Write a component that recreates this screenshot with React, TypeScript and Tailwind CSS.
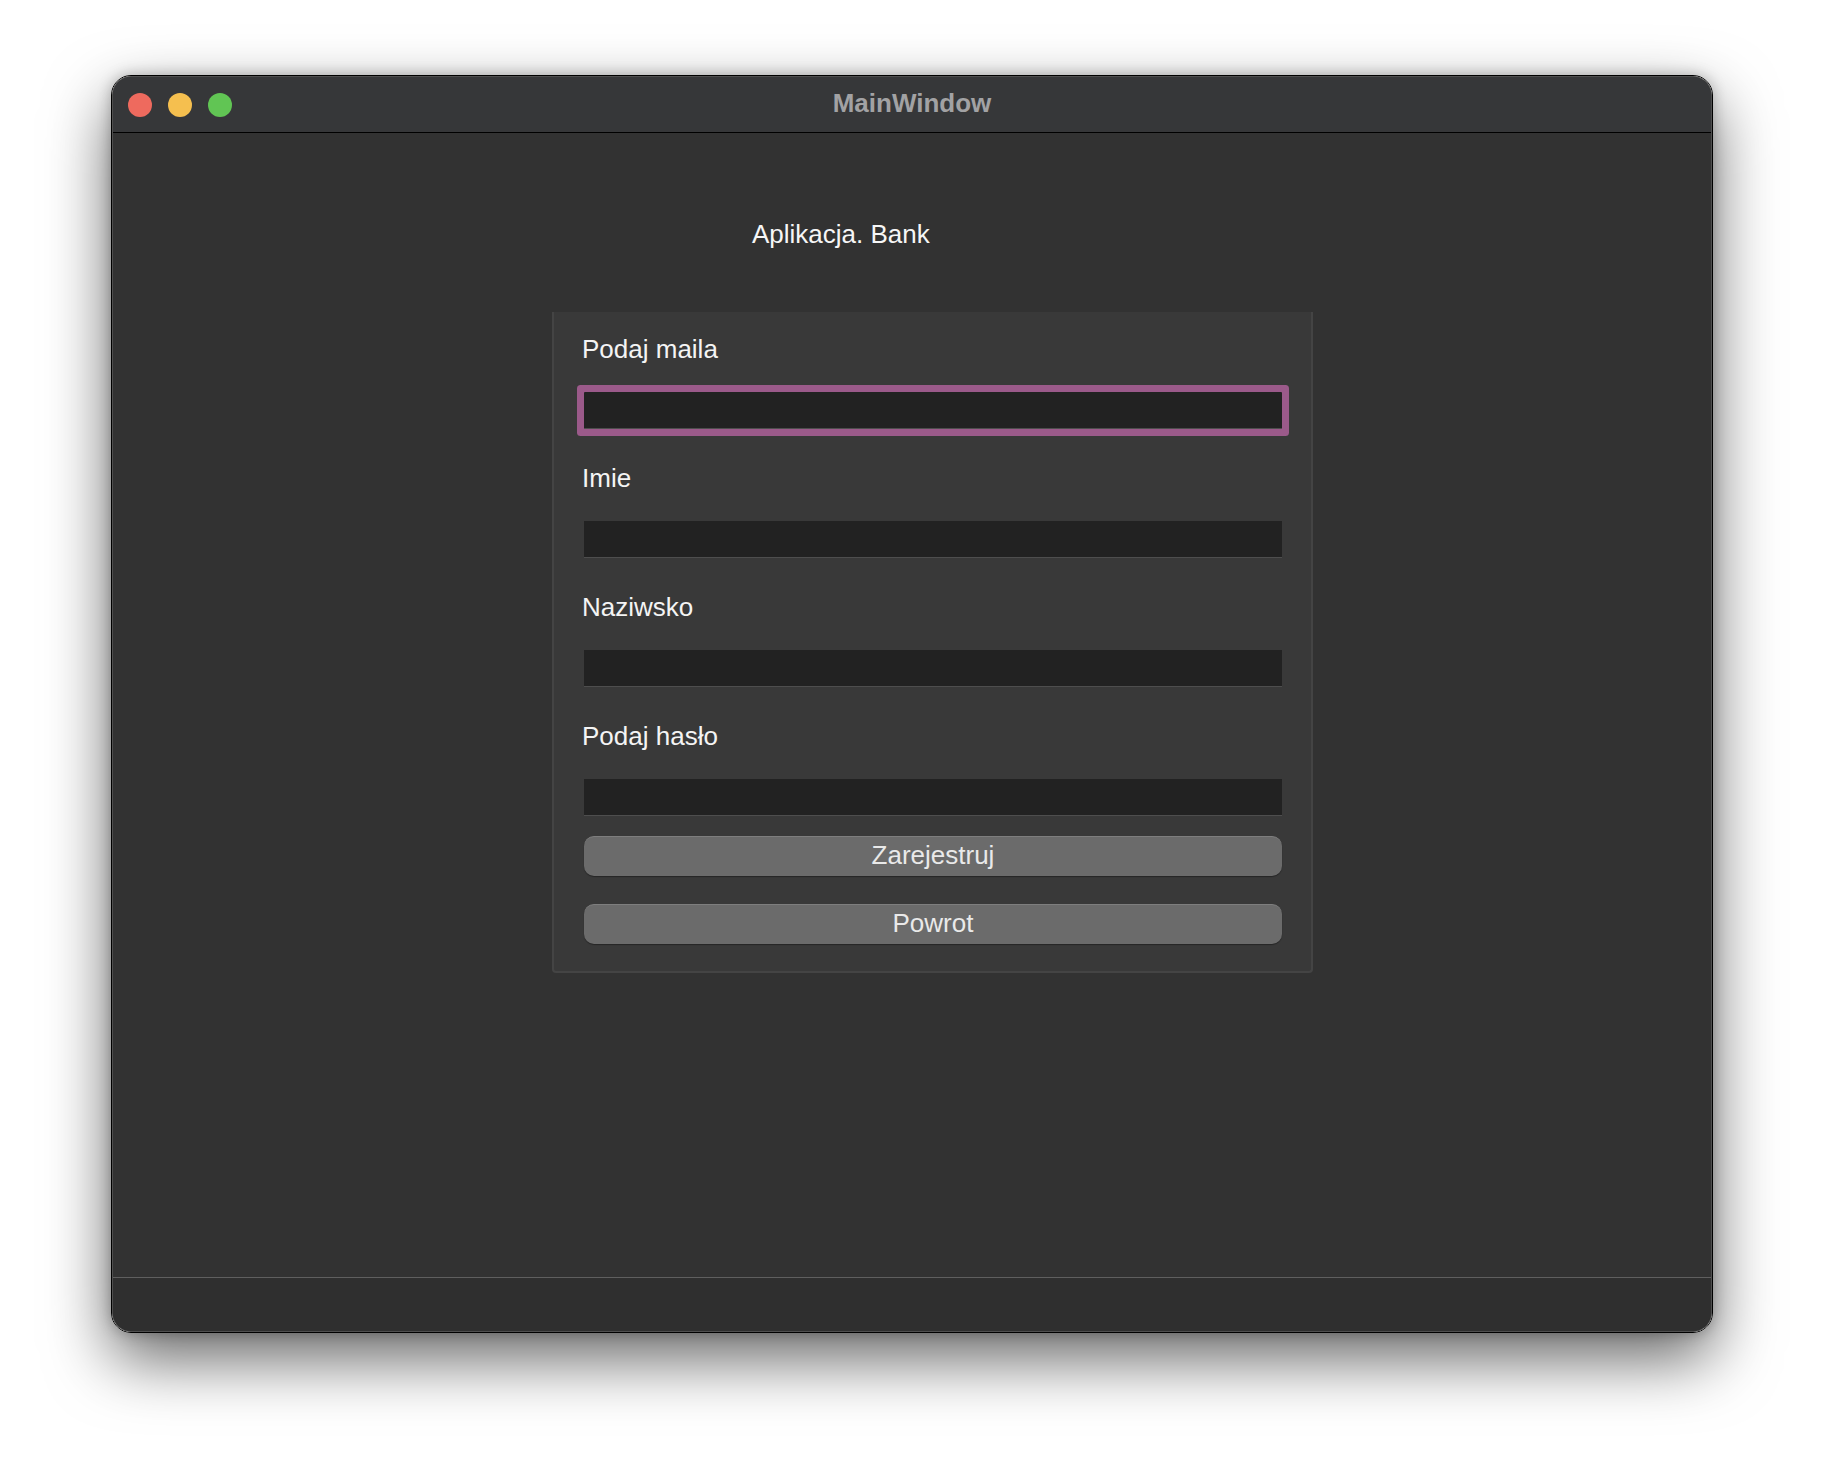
import React from "react";

const font = { fontFamily: '"Liberation Sans", Arial, sans-serif' };

function Field({ label, focused, first }: { label: string; focused?: boolean; first?: boolean }) {
  return (
    <div className={first ? "flex flex-col" : "flex flex-col mt-[34px]"}>
      <div className="-ml-[2px] h-[30px] text-[26px] leading-[30px] text-[#f4f4f4]">{label}</div>
      <div
        className={
          focused
            ? "mt-[28px] h-[37px] w-[698px] bg-[#222222] border-b border-[#4e4e4e] rounded-[1px] shadow-[0_0_0_7px_#9b5a8a]"
            : "mt-[28px] h-[37px] w-[698px] bg-[#222222] border-b border-[#4e4e4e]"
        }
      />
    </div>
  );
}

function Button({ label, className }: { label: string; className: string }) {
  return (
    <div
      className={
        "h-[40px] w-[698px] rounded-[10px] bg-[#6b6b6b] border-t border-[#7e7e7e] shadow-[0_1px_1px_rgba(0,0,0,0.35)] flex items-center justify-center pb-[4px] text-[26px] leading-[30px] text-[#e9e9e9] " +
        className
      }
    >
      {label}
    </div>
  );
}

export default function App() {
  return (
    <div className="w-[1824px] h-[1480px] bg-white pt-[75px] pl-[111px]" style={font}>
      <div className="w-[1602px] h-[1258px] rounded-[20px] border border-black shadow-[0_26px_64px_rgba(0,0,0,0.6),0_0_14px_rgba(0,0,0,0.25)]">
        <div className="w-full h-full rounded-[19px] border border-[#4f4f4f] overflow-hidden flex flex-col bg-[#323232]">
          {/* Title bar */}
          <div className="h-[56px] shrink-0 bg-[#363739] border-b border-black grid grid-cols-[1fr_auto_1fr] items-center">
            <div className="flex items-center gap-[16px] pl-[15px]">
              <div className="w-[24px] h-[24px] rounded-full bg-[#ee6a5e]" />
              <div className="w-[24px] h-[24px] rounded-full bg-[#f5bf4f]" />
              <div className="w-[24px] h-[24px] rounded-full bg-[#61c554]" />
            </div>
            <div className="pb-[4px] text-[26px] leading-[30px] font-bold text-[#a2a2a4]">MainWindow</div>
            <div />
          </div>
          {/* Body */}
          <div className="flex-1 flex flex-col pl-[439px] pt-[86px] bg-[#323232]">
            <div className="ml-[200px] h-[30px] text-[26px] leading-[30px] text-[#f6f6f6]">Aplikacja. Bank</div>
            <div className="mt-[63px] w-[761px] bg-[#393939] border-x-2 border-b-2 border-[#444444] rounded-b-[4px] pl-[30px] pt-[22px] pb-[27px] flex flex-col">
              <Field label="Podaj maila" focused first />
              <Field label="Imie" />
              <Field label="Naziwsko" />
              <Field label="Podaj hasło" />
              <Button label="Zarejestruj" className="mt-[20px]" />
              <Button label="Powrot" className="mt-[28px]" />
            </div>
          </div>
          {/* Status bar */}
          <div className="h-[54px] shrink-0 border-t border-[#5f5f5f] bg-[#2f2f2f]" />
        </div>
      </div>
    </div>
  );
}
